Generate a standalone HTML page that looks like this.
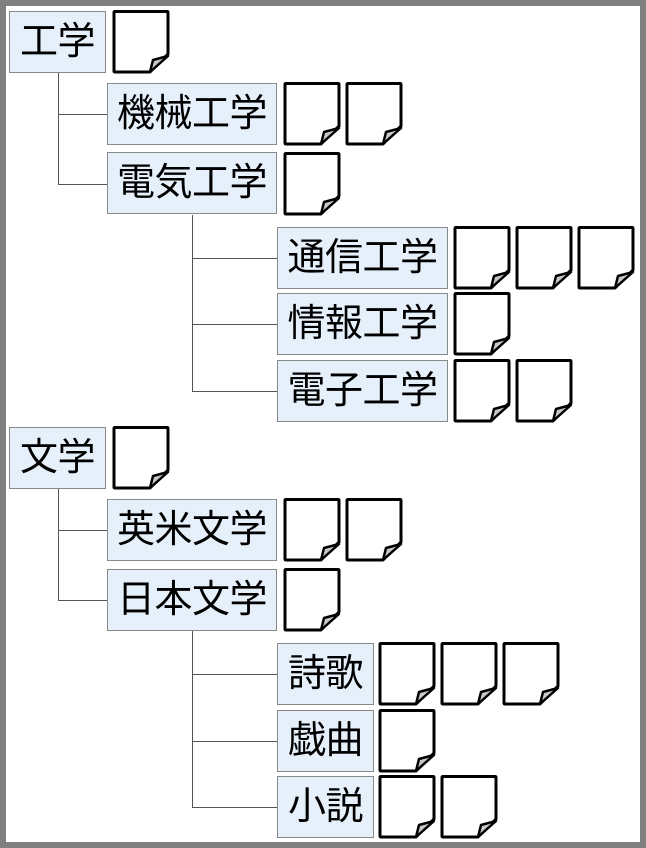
<!DOCTYPE html>
<html><head><meta charset="utf-8"><style>
html,body{margin:0;padding:0}
body{width:646px;height:848px;background:#fff;position:relative;overflow:hidden;font-family:"Liberation Sans","Noto Sans CJK JP",sans-serif}
.fr{position:absolute;left:0;top:0;width:634px;height:836px;border:6px solid #808080}
.b{position:absolute;height:60px;background:#e6f0fb;border:1px solid #888;font-size:38px;line-height:60px;text-align:center;color:#000;letter-spacing:-0.5px;font-weight:400}
.d{position:absolute;width:58px;height:64px}
.h{position:absolute;height:1px;background:#555}
.v{position:absolute;width:1px;background:#555}
</style></head><body>
<div class="fr"></div>
<svg width="0" height="0" style="position:absolute"><defs><symbol id="doc" viewBox="0 0 58 64">
<path d="M2,2.5 Q2,1.5 3,1.5 H55 Q56,1.5 56,2.5 V44 L38,62 H3 Q2,62 2,61 Z" fill="#fff" stroke="#000" stroke-width="3" stroke-linejoin="round"/>
<path d="M38,62 L41,50 L56,46 Z" fill="#c8c8c8" stroke="#000" stroke-width="2.5" stroke-linejoin="round"/>
</symbol></defs></svg>

<div class="v" style="left:58px;top:73px;height:112px"></div>
<div class="h" style="left:58px;top:114px;width:49px"></div>
<div class="h" style="left:58px;top:184px;width:49px"></div>
<div class="v" style="left:192px;top:215px;height:176px"></div>
<div class="h" style="left:192px;top:258px;width:86px"></div>
<div class="h" style="left:192px;top:324px;width:86px"></div>
<div class="h" style="left:192px;top:391px;width:86px"></div>

<div class="v" style="left:58px;top:489px;height:111px"></div>
<div class="h" style="left:58px;top:530px;width:49px"></div>
<div class="h" style="left:58px;top:600px;width:49px"></div>
<div class="v" style="left:192px;top:631px;height:176px"></div>
<div class="h" style="left:192px;top:674px;width:86px"></div>
<div class="h" style="left:192px;top:741px;width:86px"></div>
<div class="h" style="left:192px;top:807px;width:86px"></div>

<div class="b" style="left:9px;top:11px;width:95px">工学</div>
<div class="b" style="left:107px;top:83px;width:168px">機械工学</div>
<div class="b" style="left:107px;top:152px;width:168px">電気工学</div>
<div class="b" style="left:277px;top:227px;width:169px">通信工学</div>
<div class="b" style="left:277px;top:293px;width:169px">情報工学</div>
<div class="b" style="left:277px;top:360px;width:169px">電子工学</div>
<div class="b" style="left:9px;top:427px;width:95px">文学</div>
<div class="b" style="left:107px;top:499px;width:168px">英米文学</div>
<div class="b" style="left:107px;top:569px;width:168px">日本文学</div>
<div class="b" style="left:277px;top:643px;width:95px">詩歌</div>
<div class="b" style="left:277px;top:710px;width:95px">戯曲</div>
<div class="b" style="left:277px;top:776px;width:95px">小説</div>

<svg class="d" style="left:112px;top:10px"><use href="#doc"/></svg>
<svg class="d" style="left:283px;top:82px"><use href="#doc"/></svg>
<svg class="d" style="left:345px;top:82px"><use href="#doc"/></svg>
<svg class="d" style="left:283px;top:152px"><use href="#doc"/></svg>
<svg class="d" style="left:453px;top:226px"><use href="#doc"/></svg>
<svg class="d" style="left:515px;top:226px"><use href="#doc"/></svg>
<svg class="d" style="left:577px;top:226px"><use href="#doc"/></svg>
<svg class="d" style="left:453px;top:292px"><use href="#doc"/></svg>
<svg class="d" style="left:453px;top:359px"><use href="#doc"/></svg>
<svg class="d" style="left:515px;top:359px"><use href="#doc"/></svg>
<svg class="d" style="left:112px;top:426px"><use href="#doc"/></svg>
<svg class="d" style="left:283px;top:498px"><use href="#doc"/></svg>
<svg class="d" style="left:345px;top:498px"><use href="#doc"/></svg>
<svg class="d" style="left:283px;top:568px"><use href="#doc"/></svg>
<svg class="d" style="left:378px;top:642px"><use href="#doc"/></svg>
<svg class="d" style="left:440px;top:642px"><use href="#doc"/></svg>
<svg class="d" style="left:502px;top:642px"><use href="#doc"/></svg>
<svg class="d" style="left:378px;top:709px"><use href="#doc"/></svg>
<svg class="d" style="left:378px;top:775px"><use href="#doc"/></svg>
<svg class="d" style="left:440px;top:775px"><use href="#doc"/></svg>
</body></html>
